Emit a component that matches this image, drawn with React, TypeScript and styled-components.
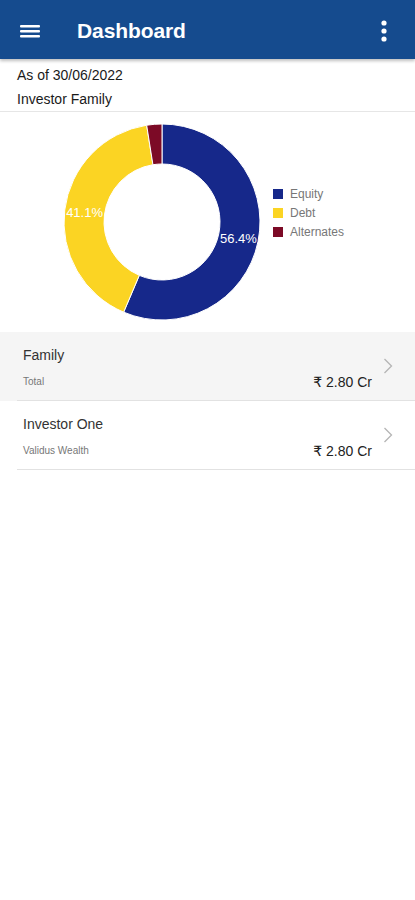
import React from "react";
import styled, { createGlobalStyle } from "styled-components";

const GlobalStyle = createGlobalStyle`
    html, body {
        margin: 0;
        padding: 0;
        background: #ffffff;
        font-family: "Liberation Sans", Arial, "DejaVu Sans", sans-serif;
    }
`;

const slices = [
    { name: "Equity", value: 56.4, color: "#16288a" },
    { name: "Debt", value: 41.1, color: "#fbd423" },
    { name: "Alternates", value: 2.5, color: "#7c0a26" },
];

const holdings = [
    { title: "Family", sub: "Total", amount: "₹ 2.80 Cr", shaded: true },
    { title: "Investor One", sub: "Validus Wealth", amount: "₹ 2.80 Cr", shaded: false },
];

const   Page = styled.div`
            width: 415px;
            min-height: 900px;
            background: #fff;
        `,
        Header = styled.header`
            height: 59px;
            box-sizing: border-box;
            background: #154b8e;
            display: flex;
            align-items: center;
            padding: 3px 27px 0 20px;
            box-shadow: 0 2px 3px rgba(0, 0, 0, 0.25);
            position: relative;
        `,
        Title = styled.h1`
            margin: 0 0 0 37px;
            flex: 1;
            color: #fff;
            font-size: 21px;
            font-weight: bold;
            letter-spacing: -0.1px;
        `,
        IconBtn = styled.div`
            display: flex;
            align-items: center;
            justify-content: center;
        `,
        Info = styled.div`
            padding: 8px 17px 3px;
            border-bottom: 1px solid #e6e6e6;
            display: flex;
            flex-direction: column;
            gap: 7px;
        `,
        InfoLine = styled.div`
            font-size: 14px;
            line-height: 17px;
            color: #1a1a1a;
        `,
        ChartRow = styled.div`
            display: flex;
            height: 220px;
        `,
        Legend = styled.ul`
            list-style: none;
            margin: 75px 0 0 3px;
            padding: 0;
            display: flex;
            flex-direction: column;
            gap: 5px;
        `,
        LegendItem = styled.li`
            display: flex;
            align-items: center;
            gap: 7px;
            font-size: 12px;
            line-height: 14px;
            color: #777;
        `,
        Swatch = styled.span<{ $color: string }>`
            width: 10px;
            height: 10px;
            background: ${p => p.$color};
        `,
        List = styled.div``,
        Row = styled.div<{ $shaded: boolean }>`
            background: ${p => (p.$shaded ? "#f5f5f5" : "#fff")};
            padding-left: 17px;
        `,
        RowInner = styled.div`
            height: 69px;
            border-bottom: 1px solid #e2e2e2;
            display: flex;
            align-items: center;
            padding: 0 22px 0 6px;
            box-sizing: border-box;
        `,
        RowText = styled.div`
            flex: 1;
            display: flex;
            flex-direction: column;
            gap: 13px;
            padding-top: 3px;
        `,
        RowTitle = styled.div`
            font-size: 14px;
            line-height: 16px;
            color: #333;
        `,
        RowSub = styled.div`
            font-size: 10px;
            line-height: 12px;
            color: #777;
        `,
        Amount = styled.div`
            align-self: flex-end;
            margin-bottom: 10px;
            font-size: 14px;
            color: #222;
        `,
        Chevron = styled.div`
            margin-left: 11px;
            display: flex;
            justify-content: center;
        `;

function polar(cx: number, cy: number, r: number, deg: number) {
    const a = (deg * Math.PI) / 180;
    return [cx + r * Math.sin(a), cy - r * Math.cos(a)];
}

function arcPath(cx: number, cy: number, ro: number, ri: number, start: number, end: number) {
    const large = end - start > 180 ? 1 : 0;
    const [x1, y1] = polar(cx, cy, ro, start);
    const [x2, y2] = polar(cx, cy, ro, end);
    const [x3, y3] = polar(cx, cy, ri, end);
    const [x4, y4] = polar(cx, cy, ri, start);
    return `M${x1} ${y1} A${ro} ${ro} 0 ${large} 1 ${x2} ${y2} L${x3} ${y3} A${ri} ${ri} 0 ${large} 0 ${x4} ${y4} Z`;
}

function Donut() {
    const cx = 162, cy = 110, ro = 98, ri = 58;
    let angle = 0;
    const parts = slices.map(s => {
        const start = angle;
        const end = angle + (s.value / 100) * 360;
        angle = end;
        const [lx, ly] = polar(cx, cy, (ro + ri) / 2, (start + end) / 2);
        return { ...s, d: arcPath(cx, cy, ro, ri, start, end), lx, ly };
    });
    return (
        <svg width="270" height="220" viewBox="0 0 270 220">
            {parts.map(p => (
                <path key={p.name} d={p.d} fill={p.color} stroke="#fff" strokeWidth="1" />
            ))}
            {parts.filter(p => p.value > 10).map(p => (
                <text
                    key={p.name + "l"}
                    x={p.lx}
                    y={p.ly + 5}
                    fill="#fff"
                    fontSize="13"
                    textAnchor="middle"
                    fontFamily="Liberation Sans, Arial, sans-serif"
                >
                    {p.value.toFixed(1)}%
                </text>
            ))}
        </svg>
    );
}

export default function App() {
    return (
        <Page>
            <GlobalStyle />
            <Header>
                <IconBtn>
                    <svg width="20" height="16" viewBox="0 0 20 16">
                        <rect x="0" y="2" width="20" height="2.4" rx="1" fill="#fff" />
                        <rect x="0" y="7" width="20" height="2.4" rx="1" fill="#fff" />
                        <rect x="0" y="12" width="20" height="2.4" rx="1" fill="#fff" />
                    </svg>
                </IconBtn>
                <Title>Dashboard</Title>
                <IconBtn>
                    <svg width="8" height="22" viewBox="0 0 8 22">
                        <circle cx="4" cy="3" r="2.6" fill="#fff" />
                        <circle cx="4" cy="11" r="2.6" fill="#fff" />
                        <circle cx="4" cy="19" r="2.6" fill="#fff" />
                    </svg>
                </IconBtn>
            </Header>
            <Info>
                <InfoLine>As of 30/06/2022</InfoLine>
                <InfoLine>Investor Family</InfoLine>
            </Info>
            <ChartRow>
                <Donut />
                <Legend>
                    {slices.map(s => (
                        <LegendItem key={s.name}>
                            <Swatch $color={s.color} />
                            {s.name}
                        </LegendItem>
                    ))}
                </Legend>
            </ChartRow>
            <List>
                {holdings.map(h => (
                    <Row key={h.title} $shaded={h.shaded}>
                        <RowInner>
                            <RowText>
                                <RowTitle>{h.title}</RowTitle>
                                <RowSub>{h.sub}</RowSub>
                            </RowText>
                            <Amount>{h.amount}</Amount>
                            <Chevron>
                                <svg width="10" height="16" viewBox="0 0 10 16">
                                    <path d="M1.5 1 L8.5 8 L1.5 15" fill="none" stroke="#b5b5b5" strokeWidth="1.3" />
                                </svg>
                            </Chevron>
                        </RowInner>
                    </Row>
                ))}
            </List>
        </Page>
    );
}
